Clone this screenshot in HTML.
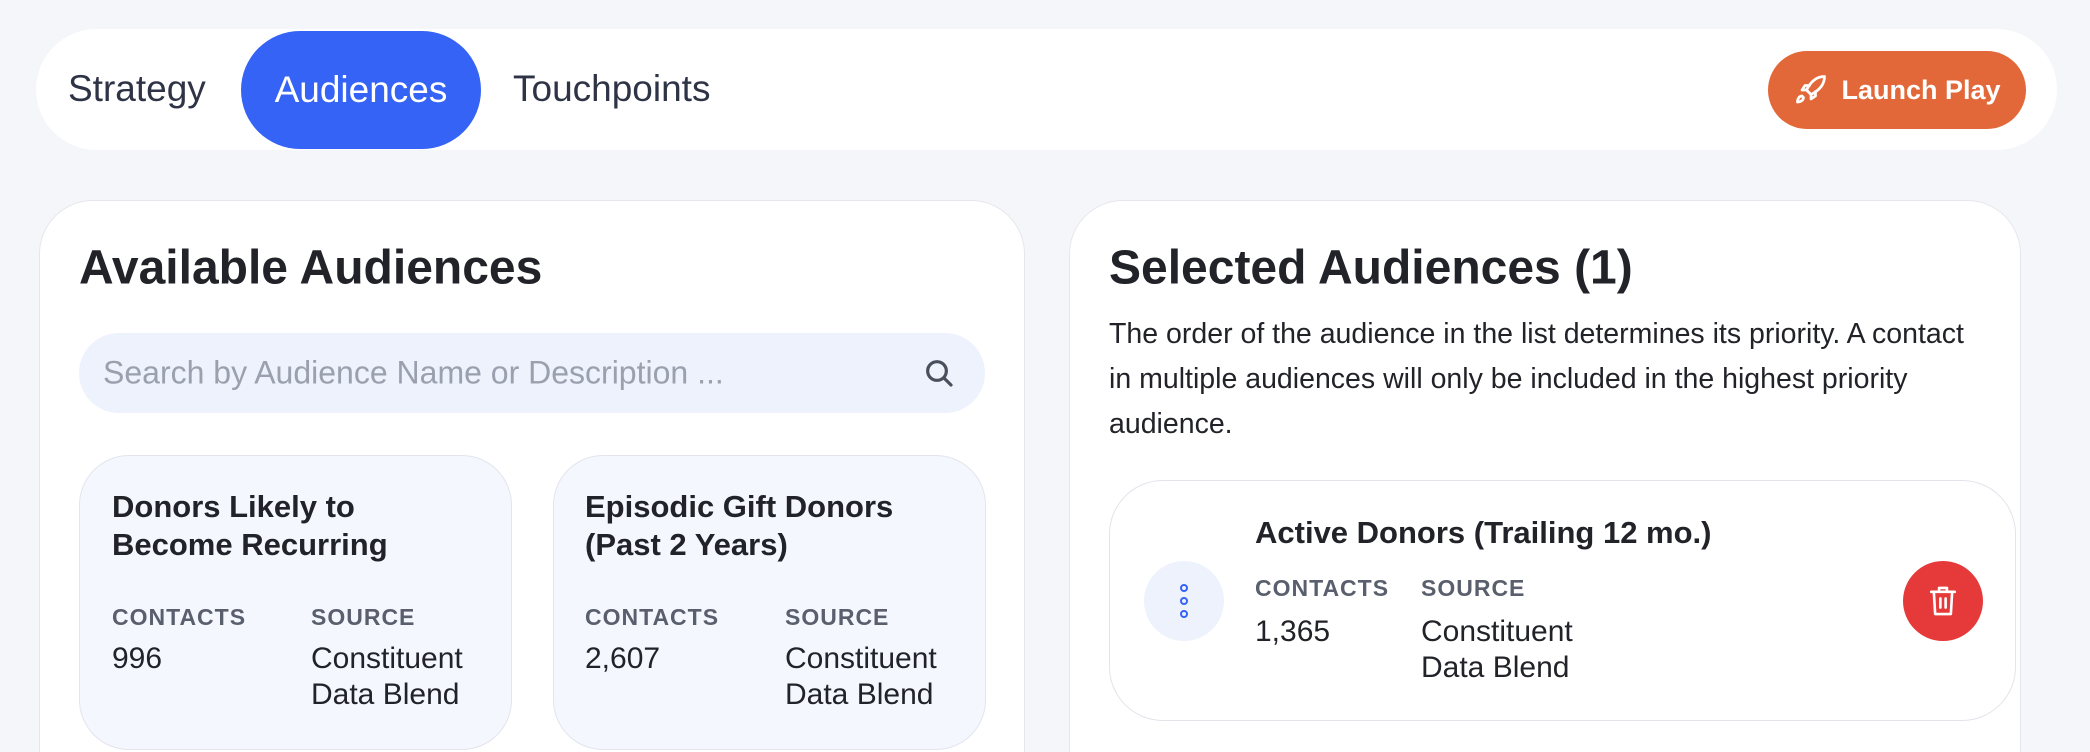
<!DOCTYPE html>
<html><head><meta charset="utf-8"><style>
*{box-sizing:border-box;margin:0;padding:0}
html,body{width:2090px;height:752px;overflow:hidden}
body{background:#f5f6fa;font-family:"Liberation Sans",sans-serif;color:#222329;position:relative}
.abs{position:absolute}
.bar{left:36px;top:29px;width:2021px;height:121px;background:#fff;border-radius:61px}
.tab{font-size:37px;color:#2e3346;top:89px;transform:translateY(-50%)}
.pill{left:241px;top:31px;width:240px;height:118px;background:#3563f5;border-radius:59px;color:#fff;font-size:37px;display:flex;align-items:center;justify-content:center}
.launch{left:1768px;top:51px;width:258px;height:78px;background:#e36839;border-radius:39px;color:#fff;font-size:27px;font-weight:bold;display:flex;align-items:center;justify-content:center;gap:12px}
.panel{background:#fff;border:1.5px solid #e6e7ec;border-bottom:none;border-radius:54px 54px 0 0;top:200px;height:552px}
h2{position:absolute;font-size:48px;font-weight:bold;color:#222329;transform:translateY(-50%)}
.search{left:79px;top:333px;width:906px;height:80px;background:#edf2fd;border-radius:40px}
.search span{position:absolute;left:24px;top:50%;transform:translateY(-50%);font-size:32px;color:#9aa0ae}
.card{background:#f4f7fe;border:1.5px solid #e2e5ec;border-radius:50px;top:455px;width:433px;height:295px}
.ct{font-size:31px;font-weight:bold;line-height:38px}
.lb{font-size:23px;font-weight:bold;color:#5a5f6e;letter-spacing:1px}
.v{font-size:30px;line-height:36px;color:#222329}
p.d{position:absolute;left:1109px;top:312px;width:920px;font-size:28.5px;line-height:45px;color:#222329;white-space:nowrap}
</style></head><body>
<div class="abs bar"></div>
<div class="abs tab" style="left:68px">Strategy</div>
<div class="abs pill">Audiences</div>
<div class="abs tab" style="left:513px">Touchpoints</div>
<div class="abs launch"><svg width="36" height="36" viewBox="0 0 24 24" fill="none" stroke="#fff" stroke-width="1.8" stroke-linecap="round" stroke-linejoin="round"><path d="M21 3c-5 0-9 3-12 9l3 3c6-3 9-7 9-12z"/><path d="M9 12l-3 0 2-3 3 0"/><path d="M12 15l0 3 3-2 0-3"/><path d="M6 16c-1.5 0-3 1.5-3 4 2.5 0 4-1.5 4-3z"/></svg>Launch Play</div>

<div class="abs panel" style="left:39px;width:986px"></div>
<h2 style="left:79px;top:268px">Available Audiences</h2>
<div class="abs search"><span>Search by Audience Name or Description ...</span>
<svg class="abs" style="right:30px;top:24px" width="32" height="32" viewBox="0 0 24 24" fill="none" stroke="#4a4f5e" stroke-width="2.4" stroke-linecap="round"><circle cx="10.5" cy="10.5" r="7"/><path d="M16 16l5 5"/></svg></div>

<div class="abs card" style="left:79px"></div>
<div class="abs ct" style="left:112px;top:488px">Donors Likely to<br>Become Recurring</div>
<div class="abs lb" style="left:112px;top:604px">CONTACTS</div>
<div class="abs lb" style="left:311px;top:604px">SOURCE</div>
<div class="abs v" style="left:112px;top:641px">996</div>
<div class="abs v" style="left:311px;top:641px">Constituent<br>Data Blend</div>

<div class="abs card" style="left:553px"></div>
<div class="abs ct" style="left:585px;top:488px">Episodic Gift Donors<br>(Past 2 Years)</div>
<div class="abs lb" style="left:585px;top:604px">CONTACTS</div>
<div class="abs lb" style="left:785px;top:604px">SOURCE</div>
<div class="abs v" style="left:585px;top:641px">2,607</div>
<div class="abs v" style="left:785px;top:641px">Constituent<br>Data Blend</div>

<div class="abs panel" style="left:1069px;width:952px"></div>
<h2 style="left:1109px;top:268px">Selected Audiences (1)</h2>
<p class="d">The order of the audience in the list determines its priority. A contact<br>in multiple audiences will only be included in the highest priority<br>audience.</p>

<div class="abs" style="left:1109px;top:480px;width:907px;height:241px;background:#fff;border:1.5px solid #e2e4ea;border-radius:54px"></div>
<div class="abs" style="left:1144px;top:561px;width:80px;height:80px;border-radius:50%;background:#edf2fd"></div>
<svg class="abs" style="left:1176px;top:582px" width="16" height="38" viewBox="0 0 16 38" fill="none" stroke="#3563f5" stroke-width="2"><circle cx="8" cy="6" r="3"/><circle cx="8" cy="19" r="3"/><circle cx="8" cy="32" r="3"/></svg>
<div class="abs ct" style="left:1255px;top:514px">Active Donors (Trailing 12 mo.)</div>
<div class="abs lb" style="left:1255px;top:575px">CONTACTS</div>
<div class="abs lb" style="left:1421px;top:575px">SOURCE</div>
<div class="abs v" style="left:1255px;top:614px">1,365</div>
<div class="abs v" style="left:1421px;top:614px">Constituent<br>Data Blend</div>
<div class="abs" style="left:1903px;top:561px;width:80px;height:80px;border-radius:50%;background:#e5393a"></div>
<svg class="abs" style="left:1927px;top:584px" width="32" height="34" viewBox="0 0 24 26" fill="none" stroke="#fff" stroke-width="2" stroke-linecap="round" stroke-linejoin="round"><path d="M3 6h18M9 6V3h6v3M5 6l1 17h12l1-17M10 11v7M14 11v7"/></svg>
</body></html>
